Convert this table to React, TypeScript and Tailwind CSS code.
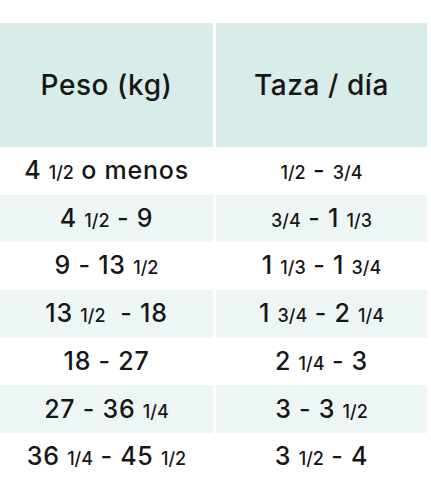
const ROWS: [string, string][] = [
  ["4 ½ o menos", "½ - ¾"],
  ["4 ½ - 9", "¾ - 1 ⅓"],
  ["9 - 13 ½", "1 ⅓ - 1 ¾"],
  ["13 ½  - 18", "1 ¾ - 2 ¼"],
  ["18 - 27", "2 ¼ - 3"],
  ["27 - 36 ¼", "3 - 3 ½"],
  ["36 ¼ - 45 ½", "3 ½ - 4"],
];

const FRACS: Record<string, string> = {
  "½": "1/2",
  "¼": "1/4",
  "¾": "3/4",
  "⅓": "1/3",
};

// splits a value into whole-number runs and small fraction runs
function Amount({ text }: { text: string }) {
  const parts = text.split(/([½¼¾⅓])/);
  return (
    <span className="whitespace-pre">
      {parts.map((p, i) =>
        FRACS[p] ? (
          <span key={i} className="text-[18px] tracking-normal">
            {FRACS[p]}
          </span>
        ) : (
          <span key={i}>{p}</span>
        ),
      )}
    </span>
  );
}

export default function App() {
  return (
    <div
      className="min-h-[500px] bg-white pt-[23px] text-[#161616]"
      style={{ fontFamily: "Inter, 'Liberation Sans', sans-serif" }}
    >
      <div className="grid w-[427px] grid-cols-[213px_211px] gap-x-[3px]">
        <div className="flex h-[124px] items-center justify-center bg-[#d8ecea] text-[28px] font-medium tracking-[0.02em]">
          Peso (kg)
        </div>
        <div className="flex h-[124px] items-center justify-center bg-[#d8ecea] text-[28px] font-medium tracking-[0.02em]">
          Taza / día
        </div>
        {ROWS.map(([peso, taza], i) => {
          const bg = i % 2 === 1 ? "bg-[#edf6f5]" : "bg-white";
          return [
            <div
              key={`p${i}`}
              className={`flex h-[47.7px] items-center justify-center text-[25px] font-medium tracking-[0.03em] ${bg}`}
            >
              <Amount text={peso} />
            </div>,
            <div
              key={`t${i}`}
              className={`flex h-[47.7px] items-center justify-center text-[25px] font-medium tracking-[0.03em] ${bg}`}
            >
              <Amount text={taza} />
            </div>,
          ];
        })}
      </div>
    </div>
  );
}
